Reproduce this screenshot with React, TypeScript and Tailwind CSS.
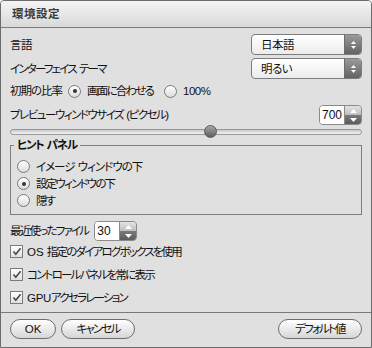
import type { ReactNode } from 'react';

function Arrows() {
  return (
    <svg width="7" height="10" viewBox="0 0 7 10">
      <path d="M3.5 1 L6 4 L1 4 Z" fill="#fff" />
      <path d="M3.5 9 L6 6 L1 6 Z" fill="#fff" />
    </svg>
  );
}

function Sp() {
  return <span className="tracking-normal"> </span>;
}

function Select({ value }: { value: string }) {
  return (
    <div className="flex h-[21px] w-[111px] overflow-hidden rounded-[4px] border border-[#7d7d7d] bg-gradient-to-b from-white to-[#ececec]">
      <div className="flex flex-1 items-center pl-[9px] text-[11.5px] tracking-[-0.5px] text-[#111]">{value}</div>
      <div className="flex w-[17px] items-center justify-center border-l border-[#6c6c6c] bg-gradient-to-b from-[#9a9a9a] to-[#636363]">
        <Arrows />
      </div>
    </div>
  );
}

function Spinner({ value, w }: { value: string; w: string }) {
  return (
    <div className="flex h-[20px] overflow-hidden rounded-[4px] border border-[#8a8a8a]">
      <div className={`flex items-center bg-white pl-[2px] text-[12px] tracking-normal text-[#111] ${w}`}>{value}</div>
      <div className="flex w-[17px] flex-col border-l border-[#8a8a8a]">
        <div className="flex flex-1 items-center justify-center bg-gradient-to-b from-[#e4e4e4] to-[#bdbdbd]">
          <svg width="7" height="4" viewBox="0 0 7 4">
            <path d="M3.5 0 L7 4 L0 4 Z" fill="#fff" />
          </svg>
        </div>
        <div className="flex flex-1 items-center justify-center bg-gradient-to-b from-[#7a7a7a] to-[#5c5c5c]">
          <svg width="7" height="4" viewBox="0 0 7 4">
            <path d="M3.5 4 L7 0 L0 0 Z" fill="#fff" />
          </svg>
        </div>
      </div>
    </div>
  );
}

function Radio({ checked, children, className = '' }: { checked?: boolean; children: ReactNode; className?: string }) {
  return (
    <div className={`flex h-[13px] items-center gap-[6px] ${className}`}>
      <span className="flex h-[13px] w-[13px] shrink-0 items-center justify-center rounded-full border border-[#7a7a7a] bg-gradient-to-b from-white to-[#dcdcdc]">
        {checked && <span className="h-[4px] w-[4px] rounded-full bg-[#333]" />}
      </span>
      <span>{children}</span>
    </div>
  );
}

function Check({ children }: { children: ReactNode }) {
  return (
    <div className="flex h-[13px] items-center gap-[4px]">
      <span className="flex h-[13px] w-[13px] shrink-0 items-center justify-center border border-[#7a7a7a] bg-gradient-to-b from-white to-[#e0e0e0]">
        <svg width="10" height="9" viewBox="0 0 10 9">
          <path d="M1.5 4.5 L3.8 7.2 L8.6 1.2" fill="none" stroke="#4a4a4a" strokeWidth="1.6" />
        </svg>
      </span>
      <span>{children}</span>
    </div>
  );
}

function Pill({ children, w }: { children: ReactNode; w: string }) {
  return (
    <button className={`flex h-[20px] items-center justify-center rounded-full border border-[#6d6d6d] bg-gradient-to-b from-white to-[#d6d6d6] text-[11.5px] text-[#111] ${w}`}>
      {children}
    </button>
  );
}

export default function App() {
  return (
    <div className="h-[348px] w-[372px] overflow-hidden rounded-t-[4px] border border-[#6c6c6c] bg-[#e0e0e0] font-['Liberation_Sans','Noto_Sans_CJK_JP',sans-serif] text-[11.5px] leading-[14px] tracking-[-1.8px] text-[#111] [font-feature-settings:'palt'_1]">
      {/* Title bar */}
      <div className="flex h-[27px] items-center border-b border-[#7a7a7a] bg-gradient-to-b from-[#f4f4f4] to-[#d9d9d9] pl-[11px] text-[11.5px] font-bold tracking-[0.5px] text-[#3a3a3a]">
        環境設定
      </div>

      <div className="flex flex-col px-[9px]">
        <div className="mt-[6px] flex h-[21px] items-center justify-between">
          <span className="tracking-[-0.5px]">言語</span>
          <Select value="日本語" />
        </div>
        <div className="mt-[3px] flex h-[21px] items-center justify-between">
          <span>
            インターフェイス<Sp />テーマ
          </span>
          <Select value="明るい" />
        </div>
        <div className="mt-[5px] flex h-[14px] items-center gap-[6px]">
          <span className="tracking-[-1px]">初期の比率</span>
          <Radio checked>画面に合わせる</Radio>
          <Radio className="ml-[5px]">
            <span className="tracking-[-0.5px]">100%</span>
          </Radio>
        </div>
        <div className="mt-[7px] flex h-[20px] items-center justify-between">
          <span className="tracking-[-1.5px]">
            プレビューウィンドウサイズ<Sp />(ピクセル)
          </span>
          <Spinner value="700" w="w-[24px]" />
        </div>

        {/* Slider */}
        <div className="grid h-[13px] items-center">
          <div className="h-[6px] w-full rounded-full border border-[#9a9a9a] bg-gradient-to-b from-[#c8c8c8] to-[#f4f4f4] [grid-area:1/1]" />
          <div className="ml-[194px] h-[13px] w-[13px] rounded-full border border-[#5a5a5a] bg-gradient-to-b from-[#a8a8a8] to-[#5e5e5e] [grid-area:1/1]" />
        </div>

        {/* Hint panel */}
        <div className="relative mt-[7px] flex h-[70px] flex-col gap-[4px] border border-[#7e7e7e] pl-[6px] pt-[14px]">
          <span className="absolute -top-[8px] left-[3px] bg-[#e0e0e0] px-[3px] font-bold tracking-[-1.3px]">
            ヒント<Sp />パネル
          </span>
          <Radio>
            <span className="tracking-[-1px]">
              イメージ<Sp />ウィンドウの下
            </span>
          </Radio>
          <Radio checked>設定ウィンドウの下</Radio>
          <Radio>隠す</Radio>
        </div>

        <div className="mt-[6px] flex h-[20px] items-center gap-[6px]">
          <span>最近使ったファイル</span>
          <Spinner value="30" w="w-[24px]" />
        </div>

        <div className="mt-[4px] flex flex-col gap-[10px]">
          <Check>
            <span className="tracking-normal">OS </span>指定のダイアログボックスを使用
          </Check>
          <Check>コントロールパネルを常に表示</Check>
          <Check>
            <span className="tracking-[-0.3px]">GPU</span>アクセラレーション
          </Check>
        </div>
      </div>

      <div className="mt-[8px] border-t border-[#7a7a7a]" />
      <div className="flex items-center justify-between px-[9px] pt-[6px]">
        <div className="flex gap-[5px]">
          <Pill w="w-[46px] tracking-normal">OK</Pill>
          <Pill w="w-[74px]">キャンセル</Pill>
        </div>
        <Pill w="w-[84px]">デフォルト値</Pill>
      </div>
    </div>
  );
}
